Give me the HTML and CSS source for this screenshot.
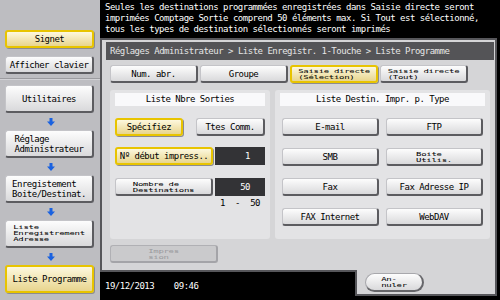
FILE: index.html
```html
<!DOCTYPE html>
<html lang="fr">

<head>
    <meta charset="UTF-8">
    <title>Liste Programme</title>
    <link rel="stylesheet" href="styles.css">
</head>

<body>
    <div class="screen">
        <aside class="side">
            <div class="side-top">
                <button class="btn yellow side-btn">Signet</button>
                <button class="btn side-btn">Afficher clavier</button>
            </div>
            <div class="steps">
                <button class="btn step">Utilitaires</button>
                <svg class="arrow" viewBox="0 0 8 8"><path d="M2.5 0h3v3.5H8L4 8 0 3.5h2.5z" /></svg>
                <button class="btn step"><span class="block">Réglage<br>Administrateur</span></button>
                <svg class="arrow" viewBox="0 0 8 8"><path d="M2.5 0h3v3.5H8L4 8 0 3.5h2.5z" /></svg>
                <button class="btn step"><span class="block">Enregistement<br>Boite/Destinat.</span></button>
                <svg class="arrow" viewBox="0 0 8 8"><path d="M2.5 0h3v3.5H8L4 8 0 3.5h2.5z" /></svg>
                <button class="btn step"><span class="small">Liste<br>Enregistrement<br>Adresse</span></button>
                <svg class="arrow" viewBox="0 0 8 8"><path d="M2.5 0h3v3.5H8L4 8 0 3.5h2.5z" /></svg>
                <button class="btn step yellow">Liste Programme</button>
            </div>
        </aside>

        <main class="main">
            <div class="message">
                Seules les destinations programmées enregistrées dans Saisie directe seront<br>
                imprimées Comptage Sortie comprend 50 éléments max. Si Tout est sélectionné,<br>
                tous les types de destination sélectionnés seront imprimés
            </div>

            <section class="panel">
                <div class="crumb">Réglages Administrateur &gt; Liste Enregistr. 1-Touche &gt; Liste Programme</div>

                <div class="tabs">
                    <button class="btn tab">Num. abr.</button>
                    <button class="btn tab">Groupe</button>
                    <button class="btn tab yellow"><span class="small">Saisie directe<br>(Sélection)</span></button>
                    <button class="btn tab"><span class="small">Saisie directe<br>(Tout)</span></button>
                </div>

                <div class="lists">
                    <div class="list list-left">
                        <div class="list-head">Liste Nbre Sorties</div>
                        <div class="row row-choice">
                            <button class="btn yellow choice">Spécifiez</button>
                            <button class="btn choice wide">Ttes Comm.</button>
                        </div>
                        <div class="row row-start">
                            <button class="btn yellow label-btn">Nº début impress..</button>
                            <div class="value">1</div>
                        </div>
                        <div class="row row-count">
                            <button class="btn label-btn"><span class="small">Nombre de<br>Destinations</span></button>
                            <div class="value">50</div>
                        </div>
                        <div class="range"><span>1</span><span>-</span><span>50</span></div>
                    </div>

                    <div class="list list-right">
                        <div class="list-head">Liste Destin. Impr. p. Type</div>
                        <div class="types">
                            <button class="btn">E-mail</button>
                            <button class="btn">FTP</button>
                            <button class="btn">SMB</button>
                            <button class="btn"><span class="small">Boite<br>Utilis.</span></button>
                            <button class="btn">Fax</button>
                            <button class="btn">Fax Adresse IP</button>
                            <button class="btn">FAX Internet</button>
                            <button class="btn">WebDAV</button>
                        </div>
                    </div>
                </div>

                <button class="btn print" disabled><span class="small">Impres<br>sion</span></button>
            </section>

            <footer class="footer">
                <div class="date">19/12/2013&nbsp;&nbsp;&nbsp;&nbsp;09:46</div>
                <div class="cancel-area">
                    <button class="btn cancel"><span class="small">An-<br>nuler</span></button>
                </div>
            </footer>
        </main>
    </div>
</body>

</html>
```

FILE: styles.css
```css
body {
    margin: 0;
    background-color: #000;
    font-family: "DejaVu Sans Mono", monospace;
    font-size: 9px;
    letter-spacing: -0.5px;
}

.screen {
    display: grid;
    grid-template-columns: 100px 400px;
    width: 500px;
    height: 300px;
    overflow: hidden;
}

/* buttons */
.btn {
    font: inherit;
    letter-spacing: inherit;
    color: #000;
    background: linear-gradient(#fdfdfd, #d9d9db);
    border: 1px solid #c4c4c8;
    border-right: 2px solid #5c5c60;
    border-bottom: 2px solid #5c5c60;
    border-radius: 3px;
    padding: 0;
    margin: 0;
    height: 18px;
    box-sizing: border-box;
    display: flex;
    align-items: center;
    justify-content: center;
    white-space: nowrap;
}

.btn.yellow {
    background: linear-gradient(#fdf8de, #e8d58e);
    border: 2px solid #e8c400;
    box-shadow: 1px 1px 0 #8c8c90;
}

/* squeezed two-line labels */
.small {
    display: inline-block;
    text-align: left;
    letter-spacing: -0.3px;
    line-height: 9px;
    transform: scaleY(0.66);
}

.block {
    display: inline-block;
    text-align: left;
    line-height: 10px;
}

/* sidebar */
.side {
    background-color: #bdbdc1;
}

.side-top {
    height: 79px;
    box-sizing: border-box;
    padding: 30px 0 0 5px;
    display: flex;
    flex-direction: column;
    gap: 8px;
    border-bottom: 1px solid #9c9ca0;
}

.side-btn {
    width: 89px;
}

.steps {
    padding: 5px 0 0 5px;
    display: flex;
    flex-direction: column;
    align-items: flex-start;
    border-top: 1px solid #d2d2d6;
}

.step {
    width: 89px;
    height: 28px;
}

.arrow {
    width: 8px;
    height: 8px;
    margin: 5px 0 4px 42px;
    fill: #1a62e0;
}

/* main column */
.main {
    display: flex;
    flex-direction: column;
    background-color: #000;
}

.message {
    height: 38px;
    box-sizing: border-box;
    padding: 2px 0 0 5px;
    color: #fff;
    line-height: 11px;
}

.panel {
    height: 232px;
    margin-right: 3px;
    box-sizing: border-box;
    background-color: #d5d5d7;
    border: 2px solid #56565a;
    border-bottom: none;
    padding: 2px 1px 0 4px;
}

.crumb {
    height: 18px;
    line-height: 18px;
    padding-left: 4px;
    background-color: #545457;
    color: #e6e6e6;
}

.tabs {
    display: flex;
    gap: 2px;
    margin: 5px 0 0 4px;
}

.tab {
    width: 88px;
}

.lists {
    display: flex;
    gap: 5px;
    margin: 7px 0 0 4px;
}

.list {
    height: 149px;
    background-color: #e3e3e5;
    border-radius: 3px;
    box-sizing: border-box;
    padding: 3px 5px 0;
}

.list-left {
    width: 160px;
}

.list-right {
    width: 215px;
}

.list-head {
    height: 13px;
    line-height: 13px;
    text-align: center;
    background-color: #f9f9fb;
    color: #000;
}

.row {
    display: flex;
}

.row-choice {
    justify-content: space-between;
    margin-top: 12px;
}

.choice {
    width: 68px;
}

.choice.wide {
    width: 69px;
}

.row-start {
    gap: 2px;
    margin-top: 11px;
}

.row-count {
    gap: 2px;
    margin-top: 13px;
}

.label-btn {
    width: 98px;
}

.value {
    width: 50px;
    height: 18px;
    line-height: 18px;
    box-sizing: border-box;
    padding-right: 15px;
    text-align: right;
    background-color: #333336;
    color: #fff;
}

.range {
    display: flex;
    justify-content: space-between;
    width: 50px;
    box-sizing: border-box;
    padding: 0 5px;
    margin: 2px 0 0 100px;
    color: #000;
}

.types {
    display: grid;
    grid-template-columns: 97px 97px;
    column-gap: 7px;
    row-gap: 12px;
    margin: 12px 0 0 2px;
}

.print {
    width: 108px;
    margin: 6px 0 0 4px;
    background: #cacacc;
    border: 1px solid #b0b0b4;
    border-right: 2px solid #a4a4a8;
    border-bottom: 2px solid #a4a4a8;
    color: #9a9a9e;
}

/* footer */
.footer {
    display: flex;
    height: 30px;
}

.date {
    width: 255px;
    box-sizing: border-box;
    border-top: 2px solid #56565a;
    padding: 9px 0 0 5px;
    color: #fff;
}

.cancel-area {
    width: 142px;
    height: 26px;
    box-sizing: border-box;
    background-color: #d5d5d7;
    border: 2px solid #56565a;
    border-top: none;
    padding: 3px 0 0 8px;
}

.cancel {
    width: 59px;
    height: 19px;
    border-radius: 10px;
    border: 1px solid #a8a8ac;
    border-right: 2px solid #66666a;
    border-bottom: 2px solid #66666a;
}
```
